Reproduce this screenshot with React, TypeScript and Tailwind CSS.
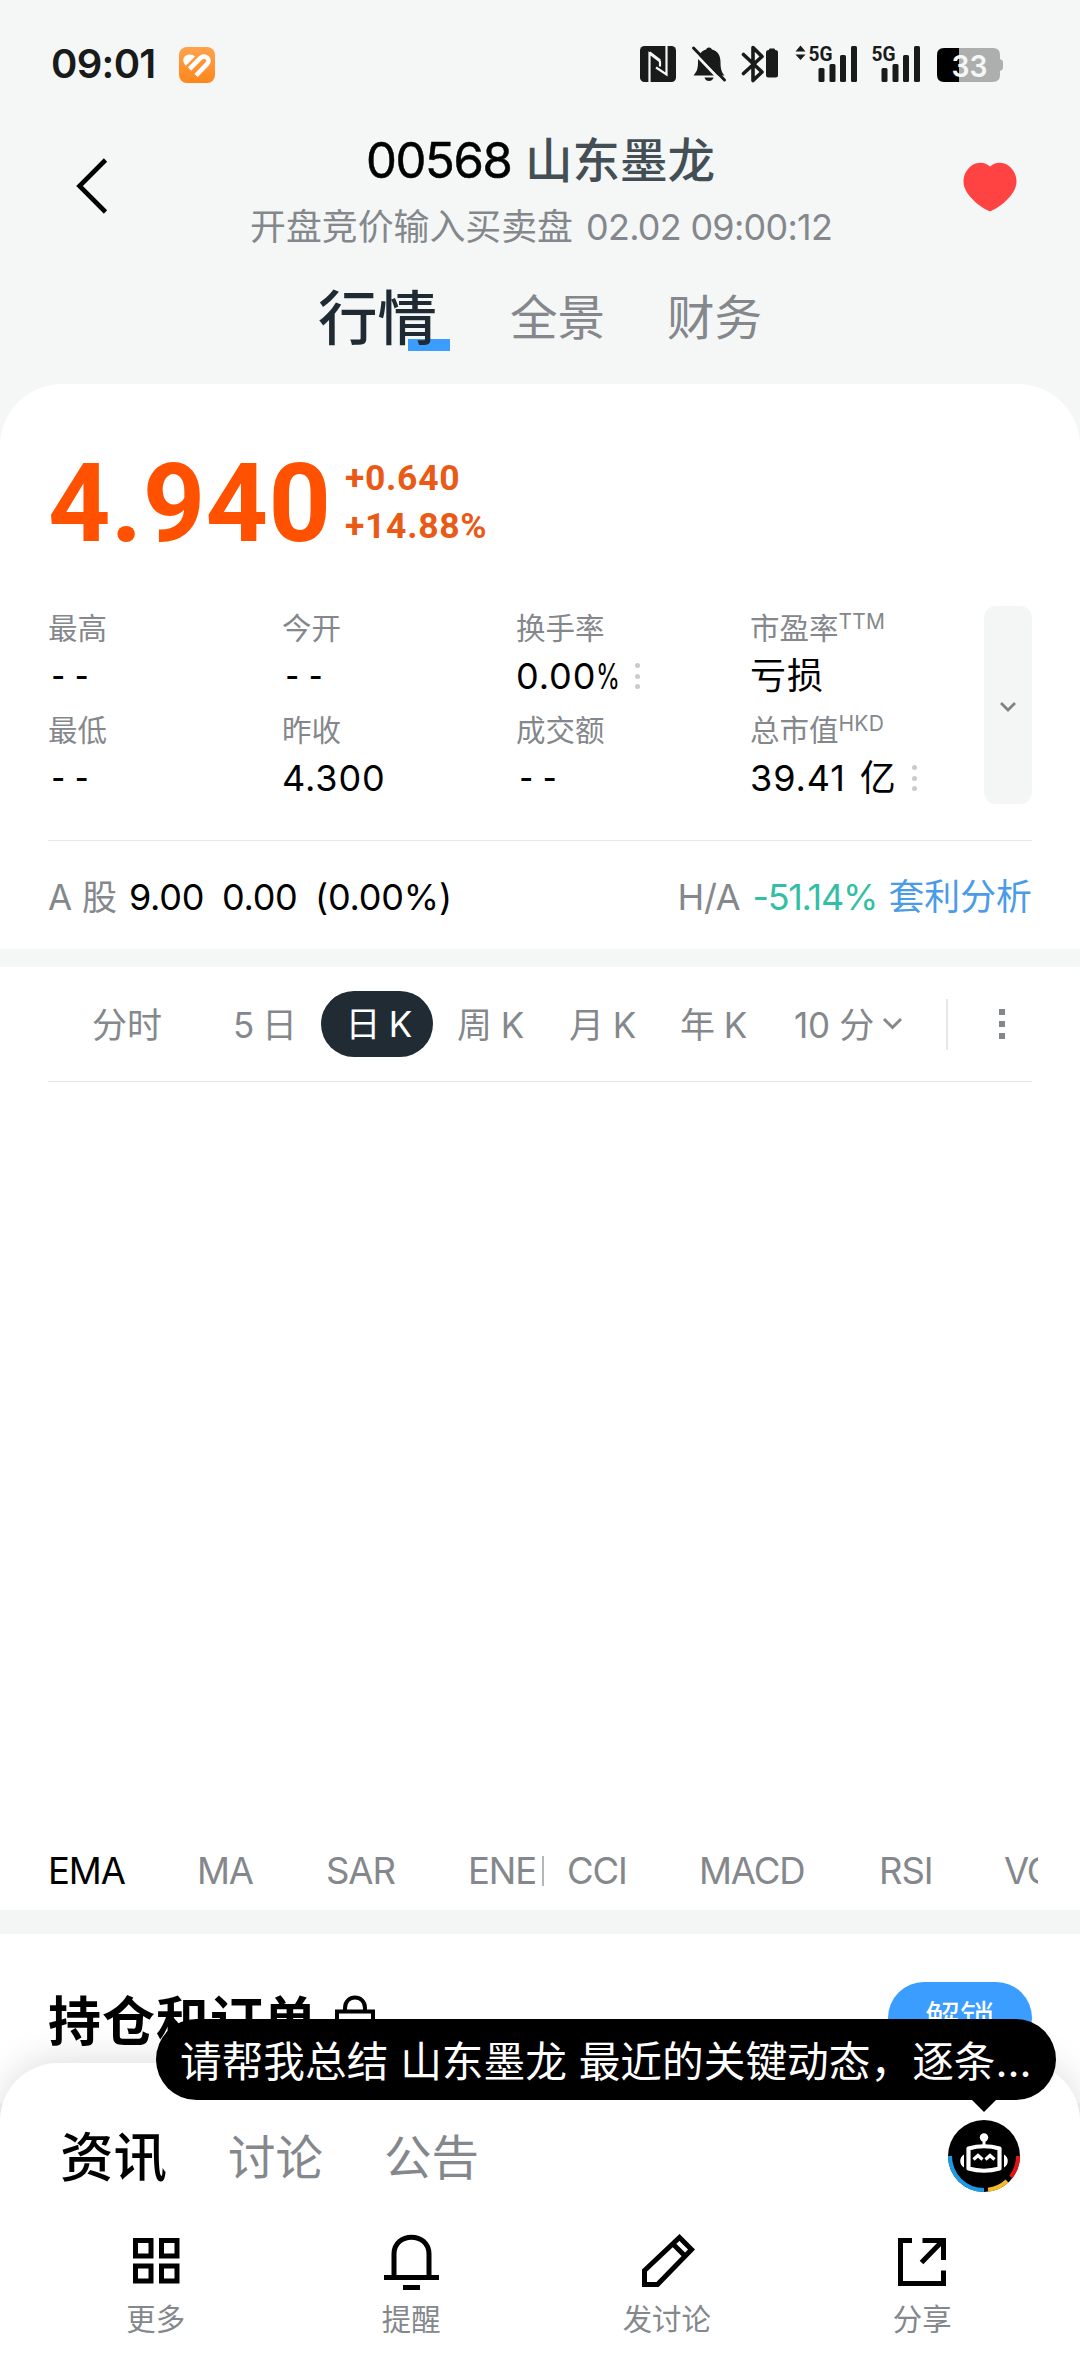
import React from 'react';

const StatusBar = () => (
  <div className="flex h-[128px] items-start pl-[51px] text-[#191a1a]">
    <div className="mt-[39px] w-[128px] text-[40px] leading-[50px] font-semibold tracking-[-0.700px] whitespace-nowrap">09:01</div>
    <svg className="mt-[47px] shrink-0" width="36" height="36" viewBox="0 0 36 36">
      <defs>
        <linearGradient id="appIcon" x1="0" y1="0" x2="0" y2="1">
          <stop offset="0" stopColor="#ffa24d" />
          <stop offset="1" stopColor="#ff861c" />
        </linearGradient>
      </defs>
      <rect width="36" height="36" rx="8" fill="url(#appIcon)" />
      <path d="M6.800 18.800 16 9.500C12.500 5.500 4.300 7.500 4.300 13C4.300 15.500 5.300 17.300 6.800 18.800Z" fill="#fff" />
      <path d="M10.500 22 21.300 11.200C26 6.800 32.500 12.500 28 17.200L17 28.500" fill="none" stroke="#fff" strokeWidth="4.600" />
      <path d="M14.200 24.200 24 14.400" fill="none" stroke="#ff922f" strokeWidth="1.800" />
    </svg>
    <svg className="mt-[34px] ml-[423px] shrink-0" width="370" height="60" viewBox="638 34 370 60">
      <rect x="640" y="46" width="36" height="36" rx="4.500" fill="#191a1a" />
      <path d="M649.500 82V53.500L660 61.500V66.500M666.500 46V74.500L656 67.500" fill="none" stroke="#f4f7f6" strokeWidth="2.200" />
      <path d="M649.500 52.500 660 60.500" stroke="#f4f7f6" strokeWidth="2.600" />
      <path d="M709 47.500C711 47.500 711.500 49 712 49.500C718 51 720.500 56 720.500 62C720.500 69 721.500 72 724.500 75.500H693.500C697 71.500 698 68.500 698 62C698 56 700.500 51 706 49.500C706.500 49 707 47.500 709 47.500Z" fill="#191a1a" />
      <path d="M704.500 77.500H713.500C713 80 711 81 709 81C707 81 705 80 704.500 77.500Z" fill="#191a1a" />
      <path d="M692 50.500 723 83" stroke="#f4f7f6" strokeWidth="3" />
      <path d="M689 43 696 54" stroke="#f4f7f6" strokeWidth="5" />
      <path d="M693.500 48 724.500 80" stroke="#191a1a" strokeWidth="3" strokeLinecap="round" />
      <path d="M743.500 54.500 762 72 753 80.500V47.500L762 56.500 743.500 73.500" fill="none" stroke="#191a1a" strokeWidth="3.600" strokeLinecap="round" strokeLinejoin="round" />
      <rect x="766" y="50" width="12" height="27.500" rx="2.500" fill="#191a1a" />
      <rect x="769" y="48.500" width="6" height="5" rx="1" fill="#191a1a" />
      <path d="M800.500 45.500 805.500 51.500H795.500ZM800.500 60 805.500 54.500H795.500Z" fill="#191a1a" />
      <text x="808.500" y="60.500" fontFamily="Roboto" fontWeight="700" fontSize="21" textLength="24" lengthAdjust="spacingAndGlyphs" fill="#191a1a">5G</text>
      <rect x="818.500" y="68" width="6" height="14" rx="1.500" fill="#191a1a" />
      <rect x="829.500" y="64" width="6" height="18" rx="1.500" fill="#191a1a" />
      <rect x="840" y="55" width="6" height="27" rx="1.500" fill="#191a1a" />
      <rect x="851" y="46" width="6" height="36" rx="1.500" fill="#191a1a" />
      <text x="871.500" y="60.500" fontFamily="Roboto" fontWeight="700" fontSize="21" textLength="24" lengthAdjust="spacingAndGlyphs" fill="#191a1a">5G</text>
      <rect x="881.500" y="68" width="6" height="14" rx="1.500" fill="#191a1a" />
      <rect x="892.500" y="64" width="6" height="18" rx="1.500" fill="#191a1a" />
      <rect x="903" y="55" width="6" height="27" rx="1.500" fill="#191a1a" />
      <rect x="914" y="46" width="6" height="36" rx="1.500" fill="#191a1a" />
      <path d="M959 48H993Q1000 48 1000 55V59Q1003 60 1003 62V68Q1003 70 1000 71V75Q1000 82 993 82H959Z" fill="#adafae" />
      <path d="M959 48H944Q937 48 937 55V75Q937 82 944 82H959Z" fill="#000" />
      <text x="951.500" y="76.500" fontFamily="Inter" fontWeight="600" fontSize="30" textLength="36" lengthAdjust="spacingAndGlyphs" fill="#f4f7f6">33</text>
    </svg>
  </div>
);

const Header = () => (
  <div className="flex h-[128px] items-start">
    <svg className="mt-[30px] ml-[70px] shrink-0" width="44" height="56" viewBox="0 0 44 56">
      <path d="M35.500 2 9.500 28 35.500 54" fill="none" stroke="#000" strokeWidth="4.600" />
    </svg>
    <div className="ml-[136px] w-[620px] whitespace-nowrap">
      <div className="mt-[1px] ml-[116px] flex h-[64px] items-baseline text-[49px] leading-[64px]">
        <span className="w-[159px] tracking-[-1.400px] text-black [-webkit-text-stroke:0.5px_black]">00568</span>
        <span className="text-[47.500px] font-medium text-[#434f55]">山东墨龙</span>
      </div>
      <div className="mt-[9px] flex h-[50px] items-baseline text-[35.900px] leading-[50px] text-[#84888c]">
        <span className="w-[336px]">开盘竞价输入买卖盘</span>
        <span className="tracking-[-0.700px]">02.02 09:00:12</span>
      </div>
    </div>
    <svg className="mt-[31px] ml-[90px] shrink-0" width="60" height="56" viewBox="0 0 60 56">
      <path d="M30 7.500C35 2.500 43 2.500 49 7C57 13.500 59.500 25 52 35C46 43 38 49 30 52.500C22 49 14 43 8 35C0.500 25 3 13.500 11 7C17 2.500 25 2.500 30 7.500Z" fill="#ff4242" />
    </svg>
  </div>
);

const PageTabs = () => (
  <div className="flex h-[128px] items-start pl-[318px] leading-[124px] whitespace-nowrap">
    <div className="relative w-[192px] text-[59.500px] font-medium text-[#1f2a33]">
      <div className="absolute top-[83px] left-[90px] h-[12px] w-[42px] bg-[#3a9dff]" />
      <span className="relative">行情</span>
    </div>
    <div className="w-[157px] text-[47.500px] text-[#84888c]">全景</div>
    <div className="text-[47.500px] text-[#84888c]">财务</div>
  </div>
);

const Dots = () => (
  <span className="mt-[9px] flex h-[26px] flex-col justify-between">
    <i className="block size-[5px] rounded-full bg-[#c9cbcd]" />
    <i className="block size-[5px] rounded-full bg-[#c9cbcd]" />
    <i className="block size-[5px] rounded-full bg-[#c9cbcd]" />
  </span>
);

type StatProps = { label: string; sup?: string; value?: string; percent?: boolean; dots?: boolean };

const Stat = ({ label, sup, value, percent, dots }: StatProps) => (
  <div className="h-[102px] w-[234px] whitespace-nowrap">
    <div className="flex h-[48px] text-[29.500px] leading-[44px] text-[#84888c]">
      {label}
      {sup && <span className="text-[21px] leading-[32px] tracking-[0.200px]">{sup}</span>}
    </div>
    <div className="flex h-[54px] items-start gap-[15px] text-[36px] leading-[44px] tracking-[0.900px] text-black">
      {value ? (
        <span className="[word-spacing:3px]">
          {value}
          {percent && <span className="-mr-[13px] inline-block origin-left scale-x-[0.68]">%</span>}
        </span>
      ) : (
        <span className="origin-left scale-x-[0.840] pl-[4px] [word-spacing:-0.500px]">- -</span>
      )}
      {dots && <Dots />}
    </div>
  </div>
);

const Quote = () => (
  <section className="h-[565px] rounded-t-[62px] bg-white px-[48px] pt-[60px]">
    <div className="flex h-[162px] text-[#ff5100] font-[Roboto,sans-serif] font-bold">
      <div className="w-[297px] text-[109px] leading-[120px] tracking-[0.300px]">4.940</div>
      <div className="pt-[10px] text-[35.500px] leading-[48px] tracking-[0.700px] text-[#e95a17]">
        <div>+0.640</div>
        <div>+14.88%</div>
      </div>
    </div>
    <div className="flex h-[234px]">
      <div className="flex h-[204px] w-[936px] flex-wrap">
        <Stat label="最高" />
        <Stat label="今开" />
        <Stat label="换手率" value="0.00" percent dots />
        <Stat label="市盈率" sup="TTM" value="亏损" />
        <Stat label="最低" />
        <Stat label="昨收" value="4.300" />
        <Stat label="成交额" />
        <Stat label="总市值" sup="HKD" value="39.41 亿" dots />
      </div>
      <div className="flex h-[198px] w-[48px] shrink-0 items-center justify-center rounded-[12px] bg-[#f4f6f6]">
        <svg width="20" height="14" viewBox="0 0 20 14" className="mt-[4px]">
          <path d="M3 3 10 10 17 3" fill="none" stroke="#7d8387" strokeWidth="2.800" />
        </svg>
      </div>
    </div>
    <div className="flex h-[109px] items-baseline border-t border-[#e6e8e8] text-[36px] leading-[112px] whitespace-nowrap">
      <span className="w-[81px] text-[35px] text-[#84888c]">A 股</span>
      <span className="w-[93px] tracking-[-0.300px]">9.00</span>
      <span className="w-[93px] tracking-[-0.300px]">0.00</span>
      <span className="tracking-[-0.200px]">(0.00%)</span>
      <span className="ml-auto flex items-baseline">
        <span className="w-[75px] tracking-[-0.300px] text-[#84888c]">H/A</span>
        <span className="w-[136px] tracking-[-1.300px] text-[#33bfa3]">-51.14%</span>
        <span className="text-[35.900px] text-[#4a9be8]">套利分析</span>
      </span>
    </div>
  </section>
);

const Periods = () => (
  <div className="mx-[48px] flex h-[115px] items-center border-b border-[#e6e8e8] text-[35px] leading-[50px] text-[#84888c] whitespace-nowrap">
    <span className="ml-[44px] w-[141px] pt-[1px]">分时</span>
    <span className="w-[88px] pt-[1px] tracking-[-1px]">5 日</span>
    <span className="flex h-[66px] w-[112px] items-center justify-center rounded-full bg-[#212b33] pl-[3px] tracking-[-0.800px] text-white">日 K</span>
    <span className="ml-[24px] w-[112px] pt-[1px] tracking-[-0.500px]">周 K</span>
    <span className="w-[111px] pt-[1px] tracking-[-0.500px]">月 K</span>
    <span className="w-[114px] pt-[1px] tracking-[-0.500px]">年 K</span>
    <span className="w-[88px] pt-[1px] tracking-[-0.300px]">10 分</span>
    <svg width="20" height="14" viewBox="0 0 20 14" className="shrink-0">
      <path d="M2 2 10.500 10.500 19 2" fill="none" stroke="#84888c" strokeWidth="3" />
    </svg>
    <i className="ml-[44px] block h-[51px] w-[2px] shrink-0 bg-[#e6e8e8]" />
    <span className="ml-[51px] flex h-[30px] flex-col justify-between">
      <i className="block size-[6px] bg-[#84888c]" />
      <i className="block size-[6px] bg-[#84888c]" />
      <i className="block size-[6px] bg-[#84888c]" />
    </span>
  </div>
);

const Indicators = () => (
  <div className="mx-[48px] flex h-[78px] w-[990px] items-center overflow-hidden text-[36.500px] leading-[78px] tracking-[-1.100px] text-[#84888c] whitespace-nowrap">
    <span className="w-[149px] shrink-0 text-black">EMA</span>
    <span className="w-[129px] shrink-0">MA</span>
    <span className="w-[142px] shrink-0">SAR</span>
    <span className="w-[74px] shrink-0">ENE</span>
    <i className="block h-[30px] w-[2px] shrink-0 bg-[#b5b8ba]" />
    <span className="ml-[23px] w-[132px] shrink-0">CCI</span>
    <span className="w-[180px] shrink-0">MACD</span>
    <span className="w-[125px] shrink-0">RSI</span>
    <span className="shrink-0">VOL</span>
  </div>
);

const Positions = () => (
  <section className="flex h-[169px] items-start bg-white pt-[48px] pr-[48px] pl-[48px]">
    <h2 className="mt-[1px] text-[53px] leading-[78px] font-bold tracking-[0.900px] whitespace-nowrap">持仓和订单</h2>
    <svg className="mt-[13px] ml-[17px]" width="40" height="46" viewBox="0 0 40 46">
      <path d="M2 16.500H38V44H2ZM10 16V13C10 -1 30 -1 30 13V16" fill="none" stroke="#000" strokeWidth="4" />
    </svg>
    <button className="ml-auto h-[72px] w-[144px] rounded-full bg-[#3a9dff] text-[35px] leading-[72px] text-white">解锁</button>
  </section>
);

const Robot = () => (
  <svg width="72" height="72" viewBox="0 0 72 72">
    <circle cx="36" cy="36" r="36" fill="#000" />
    <path d="M2 36A34 34 0 0 0 36 70" fill="none" stroke="#1e9be6" strokeWidth="4" />
    <path d="M40 69.800A34 34 0 0 0 59 61" fill="none" stroke="#f5bb26" strokeWidth="4" />
    <path d="M62.800 57A34 34 0 0 0 70 36" fill="none" stroke="#e01616" strokeWidth="4" />
    <circle cx="36" cy="17.500" r="4.200" fill="#fff" />
    <path d="M36 18V26" stroke="#fff" strokeWidth="3" />
    <path d="M20.500 28.500Q36 24 51.500 28.500V48.500Q36 53 20.500 48.500Z" fill="none" stroke="#fff" strokeWidth="4.200" strokeLinejoin="round" />
    <path d="M16 34.500C11 37 11 45 16 47.500ZM56 34.500C61 37 61 45 56 47.500Z" fill="#fff" />
    <path d="M25.500 39.500 30 35.500 34.500 39.500M37.500 39.500 42 35.500 46.500 39.500" fill="none" stroke="#fff" strokeWidth="3.200" />
  </svg>
);

const NavItem = ({ label, children }: { label: string; children: React.ReactNode }) => (
  <div className="flex w-[255.500px] flex-col items-center">
    <svg width="60" height="60" viewBox="0 0 60 60" fill="none" stroke="#000" strokeWidth="5">
      {children}
    </svg>
    <span className="mt-[7px] text-[29.400px] leading-[44px] text-[#84888c]">{label}</span>
  </div>
);

const BottomSheet = () => (
  <section className="relative -mt-[40px] h-[313px] rounded-t-[58px] bg-white shadow-[0_-4px_36px_rgba(0,0,0,0.13)]">
    <div className="absolute -top-[44px] left-[156px] h-[81px] w-[900px] rounded-full bg-black pl-[24px] text-[41.700px] leading-[86px] text-white whitespace-nowrap">
      请帮我总结 山东墨龙 最近的关键动态，逐条...
      <svg className="absolute top-[80px] left-[815px]" width="26" height="13" viewBox="0 0 26 13">
        <path d="M0 0H26L13 13Z" fill="#000" />
      </svg>
    </div>
    <div className="flex h-[165px] items-start pl-[60px] leading-[190px] whitespace-nowrap">
      <span className="w-[168px] text-[53.500px] font-medium text-black">资讯</span>
      <span className="w-[156px] text-[47.500px] text-[#84888c]">讨论</span>
      <span className="text-[47.500px] text-[#84888c]">公告</span>
      <span className="mr-[60px] ml-auto pt-[57px] leading-none">
        <Robot />
      </span>
    </div>
    <nav className="flex h-[148px] pl-[28px] pt-[3px]">
      <NavItem label="更多">
        <path d="M9.500 9.500H25V25H9.500ZM35.500 9.500H51V25H35.500ZM9.500 35H25V50H9.500ZM35.500 35H51V50H35.500Z" />
      </NavItem>
      <NavItem label="提醒">
        <path d="M13 45V23C13 0.500 48 0.500 48 23V45M3 46.500H58M22 56.500H39" />
      </NavItem>
      <NavItem label="发讨论">
        <path d="M7.500 53.500V39.500L42.500 6.500 54.500 18.500 20.500 53.500ZM36 13 48 25" />
      </NavItem>
      <NavItem label="分享">
        <path d="M20 9.500H8.500V52.500H51.500V39.500M30.500 9.500H51.500V29M50.500 10 29.500 31.500" />
      </NavItem>
    </nav>
  </section>
);

export default function App() {
  return (
    <div className="h-[2376px] w-[1080px] overflow-hidden bg-[#f4f7f6] text-black font-[Inter,'Noto_Sans_CJK_SC',sans-serif]">
      <StatusBar />
      <Header />
      <PageTabs />
      <Quote />
      <section className="mt-[18px] flex h-[943px] flex-col bg-white">
        <Periods />
        <div className="grow" />
        <Indicators />
      </section>
      <div className="h-[24px] bg-[#f4f6f6]" />
      <Positions />
      <BottomSheet />
    </div>
  );
}
